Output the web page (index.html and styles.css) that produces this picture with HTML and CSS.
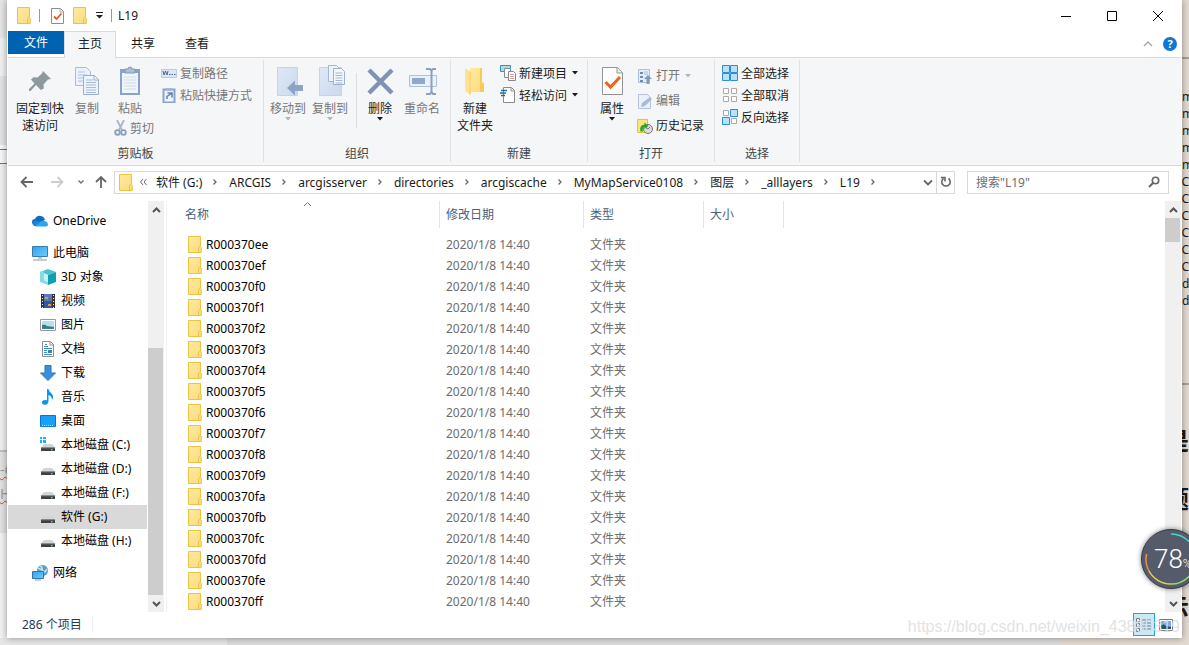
FILE: index.html
```html
<!DOCTYPE html>
<html lang="zh-CN">
<head>
<meta charset="utf-8">
<title>L19</title>
<link rel="stylesheet" href="styles.css">
</head>
<body>
<svg class="defs" aria-hidden="true">
  <linearGradient id="gFolder" x1="0" y1="0" x2="1" y2="1"><stop offset="0" stop-color="#ffeaa2"/><stop offset="1" stop-color="#fbdb7b"/></linearGradient>
  <linearGradient id="gBlue" x1="0" y1="0" x2="1" y2="1"><stop offset="0" stop-color="#2fa2ef"/><stop offset="1" stop-color="#6fccfb"/></linearGradient>
  <linearGradient id="gPale" x1="0" y1="0" x2="1" y2="1"><stop offset="0" stop-color="#dfe8f5"/><stop offset="1" stop-color="#cbd9ee"/></linearGradient>
  <symbol id="folder" viewBox="0 0 14 17"><path d="M.5.5h12v10l.8 1v5H.5z" fill="url(#gFolder)" stroke="#ebc441"/><path d="M10.5 16.500v-5l1.500-1.500" fill="none" stroke="#ebc441"/></symbol>
  <symbol id="disk" viewBox="0 0 16 16"><path d="M3.500 7h9l2 3.500h-13z" fill="#d3d5d8"/><path d="M1 10.500h14V14H1z" fill="#3d4043"/><path d="M1 10.500h14v.8H1z" fill="#808386"/><path d="M11 12h1.500v1.500H11z" fill="#46e35f"/></symbol>
  <symbol id="chev" viewBox="0 0 6 8"><path d="M1.500 1.500L4 4 1.500 6.500" fill="none" stroke="#666" stroke-width="1.300"/></symbol>
  <symbol id="drop" viewBox="0 0 6 4"><path d="M0 0h6L3 3.500z" fill="currentColor"/></symbol>
  <symbol id="up" viewBox="0 0 9 6"><path d="M1 5l3.500-3.500L8 5" fill="none" stroke="#555" stroke-width="2"/></symbol>
  <symbol id="down" viewBox="0 0 9 6"><path d="M1 1l3.500 3.500L8 1" fill="none" stroke="#555" stroke-width="2"/></symbol>
</svg>
<div class="desktop">
  <div class="behind-left"><span class="wavy">-C</span><span class="wavy">HI</span></div>
  <main class="window">
    <header class="titlebar">
      <svg class="fold" width="14" height="17"><use href="#folder"/></svg><i class="bar"></i>
      <button class="plain" aria-label="属性"><svg width="13" height="16" viewBox="0 0 13 16"><path d="M.5.5h9l3 3v12H.5z" fill="#fff" stroke="#8c8c8c"/><path d="M9 .5V4h3.500" fill="none" stroke="#aaa"/><path d="M3 8.500l2.500 2.500 5-5.500" fill="none" stroke="#e8561c" stroke-width="1.800"/></svg></button>
      <button class="plain" aria-label="新建文件夹"><svg width="14" height="17"><use href="#folder"/></svg></button>
      <button class="plain" aria-label="自定义快速访问工具栏"><svg width="7" height="7" viewBox="0 0 7 7"><path d="M0 0h7v1H0zM0 3h7L3.500 6.500z" fill="#222"/></svg></button>
      <i class="bar"></i><span class="caption">L19</span>
      <div class="sys">
        <button class="plain" aria-label="最小化"><svg width="12" height="12"><path d="M1 6.500h10" stroke="#000"/></svg></button>
        <button class="plain" aria-label="最大化"><svg width="12" height="12"><path d="M1.500 1.500h9v9h-9z" fill="none" stroke="#000"/></svg></button>
        <button class="plain" aria-label="关闭"><svg width="12" height="12"><path d="M1 1l10 10M11 1L1 11" stroke="#000"/></svg></button>
      </div>
    </header>
    <nav class="tabs">
      <button class="tab file">文件</button><button class="tab active">主页</button><button class="tab">共享</button><button class="tab">查看</button>
      <div class="tabs-end">
        <button class="plain" aria-label="折叠功能区"><svg width="10" height="6" viewBox="0 0 10 6"><path d="M1 5l4-4 4 4" fill="none" stroke="#aaa" stroke-width="1.500"/></svg></button>
        <button class="help" aria-label="帮助">?</button>
      </div>
    </nav>
    <section class="ribbon">
      <div class="group clip">
        <div class="tools">
          <button class="big"><svg width="32" height="32" viewBox="0 0 32 32"><path d="M18 6l8 8-3 .5-4.500 5 .3 4-3 1.500L11 20l-5.500 6H4v-2l5.500-5.500L6 14.500l2.500-2.300 4 .2L17 8.500z" fill="#8d989f" transform="translate(1 0)"/></svg><span>固定到快<br>速访问</span></button>
          <button class="big off"><svg width="32" height="32" viewBox="0 0 32 32"><path d="M4.500 2.500h11l4 4v14h-15z" fill="#eaf1fa" stroke="#a9bcd8"/><path d="M7 7h7M7 10h9M7 13h9M7 16h9" stroke="#b2c5df"/><path d="M12.500 10.500h11l4 4v15h-15z" fill="#eef4fb" stroke="#9bb0cf"/><path d="M23 10.500v4.500h4.500" fill="none" stroke="#9bb0cf"/><path d="M15 15h7M15 17.500h10M15 20h10M15 22.500h10M15 25h10M15 27.500h10" stroke="#a5badb"/></svg><span>复制</span></button>
          <div class="paste">
            <button class="big off"><svg width="32" height="32" viewBox="0 0 32 32"><path d="M6 4h20v26H6z" fill="#8aa1c8"/><path d="M8 8h16v20H8z" fill="#f0f5fc"/><path d="M10 12h12M10 15h12M10 18h12M10 21h12M10 24h12" stroke="#cfdced"/><path d="M11 4h3q0-2 2-2t2 2h3v4H11z" fill="#aebcd3" stroke="#8797b5"/></svg><span>粘贴</span></button>
            <button class="small off"><svg width="13" height="16" viewBox="0 0 13 16"><path d="M3 0l5 10M10 0L5 10" stroke="#a9b6c9" stroke-width="1.800"/><circle cx="3.500" cy="12.500" r="2.300" fill="none" stroke="#899dbf" stroke-width="1.800"/><circle cx="9.500" cy="12.500" r="2.300" fill="none" stroke="#899dbf" stroke-width="1.800"/></svg>剪切</button>
          </div>
          <div class="stack">
            <button class="small off"><svg width="16" height="16" viewBox="0 0 16 16"><path d="M.5 4.500h15v8H.5z" fill="#dce6f4" stroke="#bccbe1"/><path d="M2 6l1 4 1.500-4L6 10l1-4" fill="none" stroke="#52688f"/><path d="M8 9.500h1.500m1 0H12m1 0h1.500" stroke="#52688f"/></svg>复制路径</button>
            <button class="small off"><svg width="16" height="16" viewBox="0 0 16 16"><path d="M2.500 2.500h11v13h-11z" fill="#edf3fa" stroke="#8da4c8" stroke-width="2"/><path d="M5 1h6v3H5z" fill="#a7b7d1"/><path d="M6 12V9.500L10.500 6.500M6.500 6h4.500v4.500" stroke="#6480ac" stroke-width="1.500" fill="none"/></svg>粘贴快捷方式</button>
          </div>
        </div>
        <h2>剪贴板</h2>
      </div>
      <div class="group org">
        <div class="tools">
          <button class="big off"><svg width="32" height="32" viewBox="0 0 32 32"><path d="M5.500 2.500h20v28h-20z" fill="url(#gPale)" stroke="#c5d4eb"/><path d="M15 23l8-7.500V20h8v6h-8v4.500z" fill="#8ea3c6"/></svg><span>移动到</span><svg class="arrow" width="6" height="4"><use href="#drop"/></svg></button>
          <button class="big off"><svg width="32" height="32" viewBox="0 0 32 32"><path d="M5.500 2.500h22v28h-22z" fill="url(#gPale)" stroke="#c5d4eb"/><path d="M14.500.5h8l3 3v13h-11z" fill="#edf3fb" stroke="#a3b8d6"/><path d="M19.500 3.500h8l3 3v13h-11z" fill="#f3f7fc" stroke="#9db1d0"/><path d="M21.500 8h7m-7 2.500h7m-7 2.500h7m-7 2.500h7m-7 2.500h7" stroke="#a3b8d6"/></svg><span>复制到</span><svg class="arrow" width="6" height="4"><use href="#drop"/></svg></button>
          <i class="rule"></i>
          <button class="big"><svg width="32" height="32" viewBox="0 0 32 32"><path d="M5 5l23 23M28 5L5 28" stroke="#8093b5" stroke-width="4.500"/></svg><span>删除</span><svg class="arrow" width="6" height="4"><use href="#drop"/></svg></button>
          <button class="big off"><svg width="32" height="32" viewBox="0 0 32 32"><path d="M3.500 10.500h27v11h-27z" fill="#eaf1fb" stroke="#abc1e0"/><path d="M6 13h13v6H6z" fill="#91a7cc"/><path d="M20 4h4l1.500 1.500L27 4h3M25.500 5v22M20 29h4l1.500-2 1.500 2h3" fill="none" stroke="#8b9fc1" stroke-width="2"/></svg><span>重命名</span></button>
        </div>
        <h2>组织</h2>
      </div>
      <div class="group new">
        <div class="tools">
          <button class="big"><svg width="32" height="32" viewBox="0 0 32 32"><path d="M11 3h12v14l2 2v8H11z" fill="url(#gFolder)"/><path d="M21 27V3h2v14l2 2v8z" fill="#f4cc5d"/><path d="M6 3l6 4v23l-6-4z" fill="#ffe391"/><path d="M10 6l2 1v23l-2-1z" fill="#fbd97b"/></svg><span>新建<br>文件夹</span></button>
          <div class="stack">
            <button class="small"><svg width="16" height="16" viewBox="0 0 16 16"><path d="M.5.5h10v6H.5z" fill="#a9dcf0" stroke="#3f8fb8"/><path d="M4.500 3.500h6v9h-6z" fill="#fff" stroke="#7d8c98"/><path d="M8.500 6.500h5l2 2v7h-7z" fill="#fff" stroke="#888"/><path d="M10 9.500h4m-4 2h4m-4 2h4" stroke="#db9a9f"/></svg>新建项目<svg class="arrow" width="6" height="4"><use href="#drop"/></svg></button>
            <button class="small"><svg width="16" height="16" viewBox="0 0 16 16"><path d="M3.500.5h8l3 3v12h-11z" fill="#fff" stroke="#8b8b8b"/><path d="M11 .5V4h3.500" fill="none" stroke="#8b8b8b"/><path d="M1 3.500h6M0 6h6M1 8.500h4" stroke="#246fa8" stroke-width="1.500"/></svg>轻松访问<svg class="arrow" width="6" height="4"><use href="#drop"/></svg></button>
          </div>
        </div>
        <h2>新建</h2>
      </div>
      <div class="group open">
        <div class="tools">
          <button class="big"><svg width="32" height="32" viewBox="0 0 32 32"><path d="M6.500 2.500h15l5 5v22h-20z" fill="#fff" stroke="#929292"/><path d="M21 2.500V8h5.500" fill="#eee" stroke="#929292"/><path d="M9.500 17l5 5L24 12" fill="none" stroke="#f1601f" stroke-width="3"/></svg><span>属性</span><svg class="arrow" width="6" height="4"><use href="#drop"/></svg></button>
          <div class="stack">
            <button class="small off"><svg width="16" height="16" viewBox="0 0 16 16"><path d="M1.500 1.500h11v13h-11z" fill="#e5edf8" stroke="#adc1df"/><path d="M3 4h3v2H3zm0 4h3v2H3zm0 4h3v2H3z" fill="#6f8bb9"/><path d="M7 4h4M7 6h4" stroke="#adc1df"/><path d="M11 7l4 4h-2.500v5h-3v-5H7z" fill="#8299be"/></svg>打开<svg class="arrow" width="6" height="4"><use href="#drop"/></svg></button>
            <button class="small off"><svg width="16" height="16" viewBox="0 0 16 16"><path d="M1.500 1.500h9l3 3v11h-12z" fill="#eaf1fa" stroke="#b0c2dc"/><path d="M4 14l1-4 8-6 2 2-7 7z" fill="#a6badb"/></svg>编辑</button>
            <button class="small"><svg width="16" height="16" viewBox="0 0 16 16"><path d="M.5 1.500h10v13H.5z" fill="#fbe57b" stroke="#e2c143"/><circle cx="11" cy="11" r="4.500" fill="#ddd" stroke="#777"/><path d="M8.500 9.500L11 11l2-2" fill="none" stroke="#777"/><path d="M3.500 13.500Q2 7 7.500 6.500V4.500l4 3.500-4 3V9Q5 9.500 6 13.500z" fill="#26a536"/></svg>历史记录</button>
          </div>
        </div>
        <h2>打开</h2>
      </div>
      <div class="group select">
        <div class="tools"><div class="stack">
          <button class="small"><svg width="16" height="16" viewBox="0 0 16 16"><path d="M.5.5h7v7h-7zM8.500.5h7v7h-7zM.5 8.500h7v7h-7zM8.500 8.500h7v7h-7z" fill="#b9e1fa" stroke="#2d8dd8"/></svg>全部选择</button>
          <button class="small"><svg width="16" height="16" viewBox="0 0 16 16"><path d="M1.500 1.500h5v5h-5zM9.500 1.500h5v5h-5zM1.500 9.500h5v5h-5zM9.500 9.500h5v5h-5z" fill="#fff" stroke="#aaa"/></svg>全部取消</button>
          <button class="small"><svg width="16" height="16" viewBox="0 0 16 16"><path d="M1.500 1.500h5v5h-5zM9.500 9.500h5v5h-5z" fill="#fff" stroke="#aaa"/><path d="M8.500.5h7v7h-7zM.5 8.500h7v7h-7z" fill="#b9e1fa" stroke="#2d8dd8"/></svg>反向选择</button>
        </div></div>
        <h2>选择</h2>
      </div>
    </section>
    <section class="address">
      <div class="moves">
        <button class="plain" aria-label="后退"><svg width="14" height="12"><path d="M13 6H2M6.500 1L1.500 6l5 5" fill="none" stroke="#666" stroke-width="1.800"/></svg></button>
        <button class="plain" aria-label="前进"><svg width="14" height="12"><path d="M1 6h11M7.500 1l5 5-5 5" fill="none" stroke="#ccc" stroke-width="1.800"/></svg></button>
        <button class="plain" aria-label="最近浏览的位置"><svg width="8" height="6"><path d="M1.500 1.500L4 4l2.500-2.500" fill="none" stroke="#777" stroke-width="1.500"/></svg></button>
        <button class="plain" aria-label="上移"><svg width="14" height="14"><path d="M7 13V2M2 7l5-5 5 5" fill="none" stroke="#666" stroke-width="1.800"/></svg></button>
      </div>
      <div class="crumbs">
        <svg class="fold" width="14" height="17"><use href="#folder"/></svg>
        <svg class="more" width="9" height="8"><path d="M4 1L1.500 4 4 7M7.500 1L5 4l2.500 3" fill="none" stroke="#666"/></svg>
        <a href="#">软件 (G:)</a><svg width="6" height="8"><use href="#chev"/></svg>
        <a href="#">ARCGIS</a><svg width="6" height="8"><use href="#chev"/></svg>
        <a href="#">arcgisserver</a><svg width="6" height="8"><use href="#chev"/></svg>
        <a href="#">directories</a><svg width="6" height="8"><use href="#chev"/></svg>
        <a href="#">arcgiscache</a><svg width="6" height="8"><use href="#chev"/></svg>
        <a href="#">MyMapService0108</a><svg width="6" height="8"><use href="#chev"/></svg>
        <a href="#">图层</a><svg width="6" height="8"><use href="#chev"/></svg>
        <a href="#">_alllayers</a><svg width="6" height="8"><use href="#chev"/></svg>
        <a href="#">L19</a><svg width="6" height="8"><use href="#chev"/></svg>
        <button class="plain history" aria-label="以前的位置"><svg width="10" height="7"><path d="M1 1.500l4 4 4-4" fill="none" stroke="#666" stroke-width="1.800"/></svg></button>
        <button class="plain refresh" aria-label="刷新"><svg width="12" height="12"><path d="M8.500 2.500A4.200 4.200 0 1 1 3.500 2.500M1 1.500h4v4" fill="none" stroke="#666" stroke-width="1.600"/></svg></button>
      </div>
      <label class="search"><input type="text" aria-label="搜索" placeholder='搜索"L19"'><svg width="12" height="12"><circle cx="7.500" cy="4.500" r="3.200" fill="none" stroke="#666" stroke-width="1.600"/><path d="M5 7l-4 4" stroke="#666" stroke-width="2"/></svg></label>
    </section>
    <section class="body">
      <nav class="tree">
        <a href="#" class="top"><svg width="16" height="16" viewBox="0 0 16 16"><path d="M3 12a3 3 0 0 1 0-6q2-4 6-3 3 .5 4 4z" fill="#0f6cbf"/><path d="M2 13q-2-1.500-1-4 1.500-2 4-1l8 5z" fill="#1687dc"/><path d="M3 13.500l6-5q2-1.500 5 0 2 1 2 3t-2 2z" fill="#28a8ea"/></svg>OneDrive</a>
        <a href="#" class="top"><svg width="16" height="16" viewBox="0 0 16 16"><path d="M.5 1.500h15v10H.5z" fill="url(#gBlue)" stroke="#3a7ca9"/><path d="M6 13h4M1 15h14" stroke="#8399aa" stroke-width="1.200"/></svg>此电脑</a>
        <a href="#"><svg width="16" height="16" viewBox="0 0 16 16"><path d="M8 0l8 3-8 3-8-3z" fill="#4cc0cc"/><path d="M0 3l4-1v9l4 2v3l-8-3z" fill="#82dce2"/><path d="M4 4l4 2v7l-4-2z" fill="#c5f4f3"/><path d="M8 6l8-3v10l-8 3z" fill="#0e9fb2"/></svg>3D 对象</a>
        <a href="#"><svg width="16" height="16" viewBox="0 0 16 16"><path d="M1 1h14v14H1z" fill="#343434"/><path d="M4 1h8v7H4z" fill="#527bc4"/><path d="M4 8h8v7H4z" fill="#3157a6"/><path d="M5 4h3v2H5zm3 7h3v2H8z" fill="#dda336"/><path d="M9 5h2v2H9z" fill="#b8445a"/><path d="M2.500 2v13m11-13v13" stroke="#eee" stroke-dasharray="1 2"/></svg>视频</a>
        <a href="#"><svg width="16" height="16" viewBox="0 0 16 16"><path d="M.5 2.500h15v11H.5z" fill="#fff" stroke="#999"/><path d="M2 4h12v8H2z" fill="#b6dcf8"/><path d="M2 8q3-1 5 1l7 1v2H2z" fill="#427a68"/><path d="M2 11h12v1H2z" fill="#407eb7"/></svg>图片</a>
        <a href="#"><svg width="16" height="16" viewBox="0 0 16 16"><path d="M2.500.5h8l3 3v12h-11z" fill="#fff" stroke="#8e8e8e"/><path d="M10 .5V4h3.500" fill="none" stroke="#8e8e8e"/><path d="M4 5.500h4m-4 2h8m-8 2h3m-3 2h3m-3 2h8M5 3.500h2" stroke="#388fc9"/><path d="M8 9h4v3H8z" fill="#497f9d"/></svg>文档</a>
        <a href="#"><svg width="16" height="16" viewBox="0 0 16 16"><path d="M5 .5h6V8h4.500L8 15.500.5 8H5z" fill="#388fe0" stroke="#2877bd"/></svg>下载</a>
        <a href="#"><svg width="16" height="16" viewBox="0 0 16 16"><path d="M7 0h1.500q0 2 3 4.500 3 3 .5 6.500 0-4-3.500-5v6q0 3-3 3.700Q2 16 2 13.500T5 11q1 0 2 .3z" fill="#0796f0"/></svg>音乐</a>
        <a href="#"><svg width="16" height="16" viewBox="0 0 16 16"><path d="M.5 2.500h15v11H.5z" fill="#19a0f8" stroke="#0b76c5"/><path d="M2 12.500h12" stroke="#b9e7ff" stroke-dasharray="1 1"/></svg>桌面</a>
        <a href="#"><svg width="16" height="16" viewBox="0 0 16 16"><use href="#disk"/><path d="M0 0h2v2H0zm3 0h3v2H3zM0 3h2v3H0zm3 0h3v3H3z" fill="#16b5ee"/></svg>本地磁盘 (C:)</a>
        <a href="#"><svg width="16" height="16"><use href="#disk"/></svg>本地磁盘 (D:)</a>
        <a href="#"><svg width="16" height="16"><use href="#disk"/></svg>本地磁盘 (F:)</a>
        <a href="#" class="current"><svg width="16" height="16"><use href="#disk"/></svg>软件 (G:)</a>
        <a href="#"><svg width="16" height="16"><use href="#disk"/></svg>本地磁盘 (H:)</a>
        <a href="#" class="top"><svg width="16" height="16" viewBox="0 0 16 16"><circle cx="10.500" cy="5.500" r="5.500" fill="#5a9dc3"/><path d="M8 1q3 1 2 4l3 2 2-3M6 3l4 2" fill="none" stroke="#c2e4ef" stroke-width="1.500"/><path d="M.5 6.500h11v7H.5z" fill="url(#gBlue)" stroke="#3178a7"/><path d="M3 15h6" stroke="#899dab"/></svg>网络</a>
      </nav>
      <div class="scroll tree-scroll"><button class="plain" aria-label="向上滚动"><svg width="9" height="6"><use href="#up"/></svg></button><div class="track"><div class="thumb"></div></div><button class="plain" aria-label="向下滚动"><svg width="9" height="6"><use href="#down"/></svg></button></div>
      <div class="list">
        <table>
          <colgroup><col class="c-name"><col class="c-date"><col class="c-type"><col class="c-size"><col></colgroup>
          <thead><tr><th>名称<svg class="sort" width="9" height="6"><path d="M1 5l3.500-3.500L8 5" fill="none" stroke="#777"/></svg></th><th>修改日期</th><th>类型</th><th>大小</th><td></td></tr></thead>
          <tbody>
            <tr><td><svg width="14" height="17"><use href="#folder"/></svg>R000370ee</td><td>2020/1/8 14:40</td><td>文件夹</td></tr>
            <tr><td><svg width="14" height="17"><use href="#folder"/></svg>R000370ef</td><td>2020/1/8 14:40</td><td>文件夹</td></tr>
            <tr><td><svg width="14" height="17"><use href="#folder"/></svg>R000370f0</td><td>2020/1/8 14:40</td><td>文件夹</td></tr>
            <tr><td><svg width="14" height="17"><use href="#folder"/></svg>R000370f1</td><td>2020/1/8 14:40</td><td>文件夹</td></tr>
            <tr><td><svg width="14" height="17"><use href="#folder"/></svg>R000370f2</td><td>2020/1/8 14:40</td><td>文件夹</td></tr>
            <tr><td><svg width="14" height="17"><use href="#folder"/></svg>R000370f3</td><td>2020/1/8 14:40</td><td>文件夹</td></tr>
            <tr><td><svg width="14" height="17"><use href="#folder"/></svg>R000370f4</td><td>2020/1/8 14:40</td><td>文件夹</td></tr>
            <tr><td><svg width="14" height="17"><use href="#folder"/></svg>R000370f5</td><td>2020/1/8 14:40</td><td>文件夹</td></tr>
            <tr><td><svg width="14" height="17"><use href="#folder"/></svg>R000370f6</td><td>2020/1/8 14:40</td><td>文件夹</td></tr>
            <tr><td><svg width="14" height="17"><use href="#folder"/></svg>R000370f7</td><td>2020/1/8 14:40</td><td>文件夹</td></tr>
            <tr><td><svg width="14" height="17"><use href="#folder"/></svg>R000370f8</td><td>2020/1/8 14:40</td><td>文件夹</td></tr>
            <tr><td><svg width="14" height="17"><use href="#folder"/></svg>R000370f9</td><td>2020/1/8 14:40</td><td>文件夹</td></tr>
            <tr><td><svg width="14" height="17"><use href="#folder"/></svg>R000370fa</td><td>2020/1/8 14:40</td><td>文件夹</td></tr>
            <tr><td><svg width="14" height="17"><use href="#folder"/></svg>R000370fb</td><td>2020/1/8 14:40</td><td>文件夹</td></tr>
            <tr><td><svg width="14" height="17"><use href="#folder"/></svg>R000370fc</td><td>2020/1/8 14:40</td><td>文件夹</td></tr>
            <tr><td><svg width="14" height="17"><use href="#folder"/></svg>R000370fd</td><td>2020/1/8 14:40</td><td>文件夹</td></tr>
            <tr><td><svg width="14" height="17"><use href="#folder"/></svg>R000370fe</td><td>2020/1/8 14:40</td><td>文件夹</td></tr>
            <tr><td><svg width="14" height="17"><use href="#folder"/></svg>R000370ff</td><td>2020/1/8 14:40</td><td>文件夹</td></tr>
          </tbody>
        </table>
      </div>
      <div class="scroll list-scroll"><button class="plain" aria-label="向上滚动"><svg width="9" height="6"><use href="#up"/></svg></button><div class="track"><div class="thumb"></div></div><button class="plain" aria-label="向下滚动"><svg width="9" height="6"><use href="#down"/></svg></button></div>
    </section>
    <footer class="status">
      <span class="count">286 个项目</span>
      <button class="view on" aria-label="详细信息"><svg width="16" height="14" viewBox="0 0 16 14"><path d="M.5.500h3v3h-3zM.5 5.500h3v3h-3zM.5 10.500h3v3h-3z" fill="#fff" stroke="#777"/><path d="M6 2h4m1 0h4M6 5h4m1 0h4M6 8h4m1 0h4M6 11h4m1 0h4" stroke="#6c7f8c"/></svg></button>
      <button class="view" aria-label="大图标"><svg width="14" height="12" viewBox="0 0 14 12"><path d="M.5.500h13v11H.5z" fill="#fff" stroke="#777"/><path d="M2 2h10v8H2z" fill="#76aee5"/><path d="M2 7q3-3 5 0l5 1v2H2z" fill="#344f66"/></svg></button>
    </footer>
  </main>
  <div class="behind-right">
    <p class="code">m<br>m<br>m<br>m<br>m</p><p class="code cut">C<br>C<br>C<br>C<br>C<br>C</p><p class="code">d<br>d</p>
    <p class="heading">是</p><p class="heading">题</p><p class="heading last">示</p>
  </div>
  <div class="watermark">https://blog.csdn.net/weixin_43880319</div>
  <div class="meter"><svg width="60" height="60" viewBox="0 0 60 60"><g fill="none" stroke-width="1.500"><path d="M30 5a25 25 0 0 1 25 25" stroke="#40d9ca"/><path d="M55 30A25 25 0 0 1 30 55" stroke="#93dc6c"/><path d="M30 55A25 25 0 0 1 8 42" stroke="#e9d645"/><path d="M8 42A25 25 0 0 1 5.500 25" stroke="#ed9350"/></g></svg><span>78<small>%</small></span></div>
</div>
</body>
</html>
```
FILE: styles.css
```css
* { box-sizing: border-box; }
body { margin: 0; font: 12px/17px "Noto Sans", "Noto Sans CJK SC", sans-serif; color: #1a1a1a; }
button { margin: 0; padding: 0; border: 0; background: none; font: inherit; color: inherit; }
a { color: inherit; text-decoration: none; }
svg { display: block; flex: none; }
.defs { position: absolute; width: 0; height: 0; }
.plain { display: flex; align-items: center; justify-content: center; }

.desktop { position: relative; display: grid; grid-template: 1fr 7px / 7px minmax(0, 1fr) 7px; min-height: 100vh; overflow: hidden; background: linear-gradient(90deg, #e6e6e6 0 227px, #dcdcdc 227px 1060px, #e3dad2 1060px); }
.behind-left { overflow: hidden; padding-top: 458px; white-space: nowrap; color: #9b9b9b; font-size: 14px; line-height: 24px; background: linear-gradient(#e5e5e5 0 38px, #f0f0f0 38px 76px, #e3e3e3 76px 145px, #f7f7f7 145px 149px, #3783bd 149px 150px, #f7f7f7 150px 163px, #3783bd 163px 164px, #efefef 164px 450px, #bdbdbd 450px 452px, #e1e1e1 452px 533px, #f1f1f1 533px); }
.wavy { display: block; text-decoration: underline wavy #e33 1px; }
.behind-right { grid-column: 3; grid-row: 1 / 3; overflow: hidden; padding-top: 88px; background: linear-gradient(#e3dad2 0 57px, #a7a099 57px 59px, #e3dad2 59px 383px, #a7a099 383px 385px, #e3dad2 385px); }
.code { margin: 0; }
.cut { direction: rtl; }
.heading { margin: 0 0 30px; direction: rtl; font-size: 24px; line-height: 28px; font-weight: 700; }
.code + .heading { margin-top: 118px; }
.heading.last { margin: 80px 0 0; }

.window { grid-column: 2; grid-row: 1; display: flex; flex-direction: column; z-index: 1; padding: 0 1px; background: #fff; box-shadow: 0 0 7px rgba(0, 0, 0, .4); }

.titlebar { display: flex; align-items: center; gap: 9px; height: 31px; padding-left: 9px; }
.bar { width: 1px; height: 13px; background: #999; }
.titlebar .bar + .plain { margin-left: 2px; }
.titlebar .caption { margin-left: -3px; }
.titlebar .plain + .bar { margin-left: -1px; }
.titlebar .bar:first-of-type { margin-left: -1px; }
.sys { display: flex; margin-left: auto; }
.sys button { width: 46px; height: 30px; }

.tabs { display: flex; height: 27px; border-bottom: 1px solid #d9dadb; }
.tab { width: 54px; height: 25px; padding-bottom: 1px; }
.tab.file { width: 56px; height: 23px; background: #0063b1; color: #fff; }
.tab.active { width: 52px; height: 27px; padding-bottom: 4px; background: #f5f6f7; border: 1px solid #d9dadb; border-bottom: 0; }
.tabs-end { display: flex; align-items: center; gap: 10px; margin-left: auto; padding-right: 4px; }
.help { width: 14px; height: 14px; border-radius: 50%; background: #0f78d4; color: #fff; font-weight: 700; font-size: 11px; line-height: 14px; }

.ribbon { display: flex; padding: 2px 0 3px; background: #f5f6f7; border-bottom: 1px solid #d9dadb; }
.group { display: flex; flex-direction: column; height: 102px; border-right: 1px solid #e0e1e2; }
.group h2 { margin: 0; font: inherit; text-align: center; color: #444; }
.tools { display: flex; flex: 0 0 85px; align-items: flex-start; }
.big { display: flex; flex-direction: column; align-items: center; gap: 3px; width: 42px; padding-top: 5px; white-space: nowrap; }
.big .arrow { margin-top: -3px; }
.small { display: flex; align-items: center; gap: 3px; height: 22px; white-space: nowrap; }
.small .arrow { margin-left: 2px; }
.off { color: #777; }
.off .arrow { color: #b3b5b8; }
.stack { display: flex; flex-direction: column; padding-top: 2px; }
.clip { width: 256px; }
.clip .tools { padding-left: 5px; }
.clip .big:first-child { width: 54px; }
.paste { display: flex; flex-direction: column; width: 46px; margin-right: 3px; }
.paste .big:first-child { width: 46px; }
.paste .small { height: 22px; margin-left: 7px; }
.clip > .tools > .big + .big { width: 40px; }
.clip .stack { margin-left: 5px; }
.org { width: 187px; }
.org .tools { padding-left: 3px; }
.rule { width: 1px; height: 55px; margin: 13px 2px 0 5px; background: #dcdddf; }
.new { width: 137px; }
.new .tools { padding-left: 3px; gap: 4px; }
.open { width: 127px; }
.open .tools { padding-left: 3px; gap: 4px; }
.open .stack { padding-top: 3px; }
.open .small { height: 25px; }
.select { width: 85px; }
.select .tools { padding-left: 7px; }

.address { display: flex; align-items: center; height: 34px; padding: 0 12px 2px; }
.moves { display: flex; align-items: center; gap: 16px; width: 94px; }
.moves .plain:nth-child(3) { margin-left: -3px; }
.moves .plain:nth-child(4) { margin-left: -7px; }
.crumbs { display: flex; flex: 1; align-items: center; gap: 10px; min-width: 0; height: 23px; border: 1px solid #d9d9d9; white-space: nowrap; padding-left: 4px; }
.crumbs .more { margin: 0 -3px 0 -4px; }
.crumbs a { padding-left: 1px; }
.history { margin-left: auto; }
.refresh { width: 18px; height: 21px; margin-left: -7px; border-left: 1px solid #d9d9d9; }
.search { display: flex; align-items: center; width: 202px; height: 23px; margin-left: 12px; padding: 0 8px; border: 1px solid #d9d9d9; }
.search input { flex: 1; min-width: 0; padding: 0; border: 0; outline: 0; background: none; font: inherit; }
.search input::placeholder { color: #6d6d6d; opacity: 1; }

.body { display: flex; flex: 1; padding-top: 1px; }
.tree { width: 139px; padding-top: 8px; color: #000; }
.tree a { display: flex; align-items: center; gap: 5px; height: 24px; padding: 0 0 1px 32px; white-space: nowrap; }
.tree .top { padding-left: 24px; margin-bottom: 8px; }
.tree .top + .top { margin-bottom: 0; }
.tree .top:last-child { margin-top: 8px; margin-bottom: 0; }
.tree .current { background: #d9d9d9; }
.scroll { display: flex; flex-direction: column; width: 16px; background: #f0f0f0; }
.scroll button { height: 17px; }
.track { display: flex; flex: 1; flex-direction: column; }
.thumb { background: #cdcdcd; margin-right: 1px; }
.tree-scroll { margin-left: 1px; }
.tree-scroll .thumb { flex: 1; margin-top: 130px; }
.list-scroll .thumb { height: 24px; }
.list { flex: 1; margin-left: 2px; border-left: 1px solid #f2f2f2; }
.list table { width: 100%; table-layout: fixed; border-collapse: separate; border-spacing: 0; }
.c-name { width: 273px; }
.c-date { width: 144px; }
.c-type { width: 120px; }
.c-size { width: 80px; }
.list th { position: relative; height: 27px; padding: 0 6px; border-right: 1px solid #e5e5e5; font-weight: 400; text-align: left; color: #4c607a; }
.list th:first-child { padding-left: 18px; }
.sort { position: absolute; top: 0; left: 50%; }
.list tbody::before { content: ""; display: block; height: 6px; }
.list tbody td { height: 21px; padding: 0 6px; color: #6d6d6d; }
.list tbody td:first-child { display: flex; align-items: center; gap: 4px; padding-left: 21px; color: #000; }

.status { display: flex; align-items: center; height: 26px; padding: 0 4px 1px 14px; color: #1e395b; }
.count { padding-right: 10px; margin-right: auto; border-right: 1px solid #eee; }
.view { display: flex; align-items: center; justify-content: center; width: 22px; height: 23px; }
.view.on { border: 1px solid #26a0da; background: #cbe8f6; }

.watermark { position: absolute; z-index: 2; right: 9px; bottom: 7px; font: 16px/22px "Liberation Sans", sans-serif; color: rgba(222, 222, 222, .9); }
.meter { position: absolute; z-index: 3; right: -12px; bottom: 56px; width: 60px; height: 60px; border-radius: 50%; background: #555b6b; border: 1px solid #343a46; box-shadow: 0 0 5px rgba(0, 0, 0, .5); color: #fff; }
.meter svg { position: absolute; inset: -1px; }
.meter span { position: absolute; left: 12px; top: 14px; font: 300 26px/30px Roboto, sans-serif; white-space: nowrap; }
.meter small { font-size: 12px; }
```
